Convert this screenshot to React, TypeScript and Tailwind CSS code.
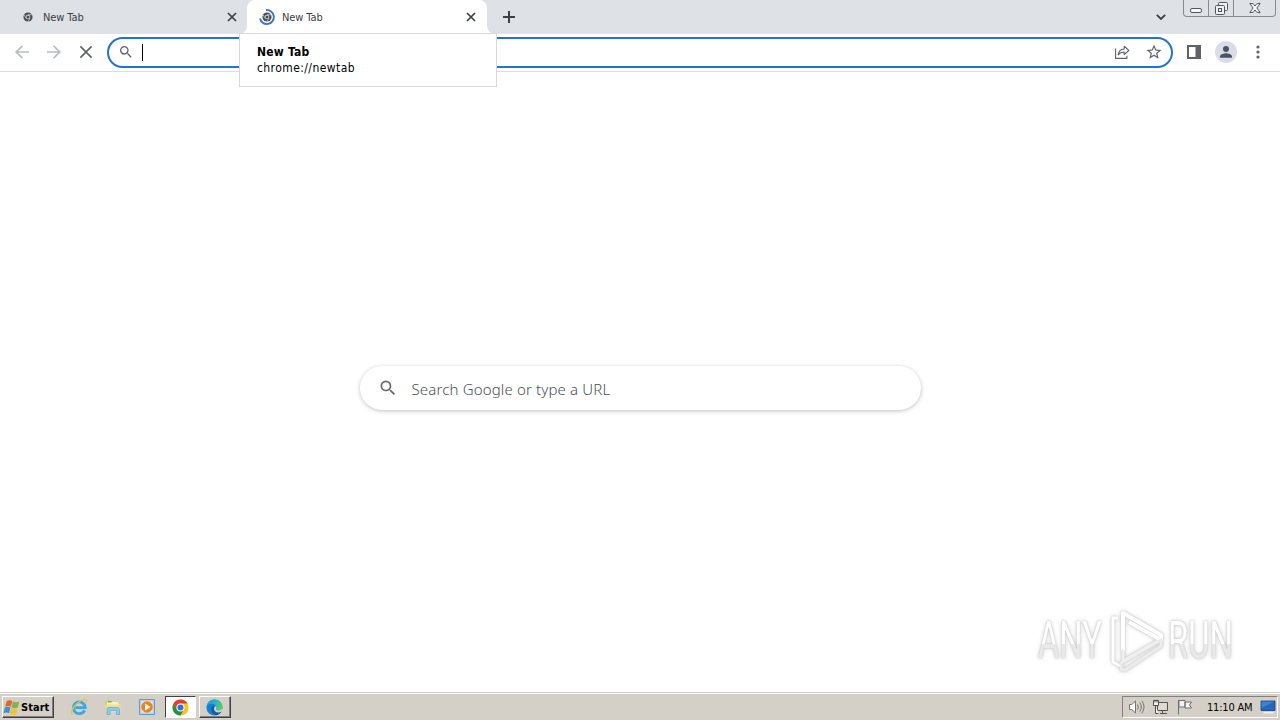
import type { ReactNode } from 'react';

const uiFont = "font-['DejaVu_Sans_Condensed','DejaVu_Sans',sans-serif]";

// --- ICONS ---
function ChromeMark({ className }: { className?: string }) {
  return (
    <svg viewBox="0 0 24 24" className={className}>
      <circle cx="12" cy="12" r="11" fill="#4b4f56" />
      <circle cx="12" cy="12" r="5.6" fill="#dee1e6" />
      <circle cx="12" cy="12" r="3.8" fill="#4b4f56" />
      <path d="M12 6.4h10M7.2 14.8L2.2 6.2M16.9 14.8l-5 8.6" stroke="#dee1e6" strokeWidth="1.6" />
    </svg>
  );
}

function SearchIcon({ className }: { className?: string }) {
  return (
    <svg viewBox="0 0 24 24" className={className} fill="currentColor">
      <path d="M15.5 14h-.79l-.28-.27A6.47 6.47 0 0 0 16 9.5 6.5 6.5 0 1 0 9.5 16c1.61 0 3.09-.59 4.23-1.57l.27.28v.79l5 4.99L20.49 19l-4.99-5zm-6 0C7.01 14 5 11.99 5 9.5S7.01 5 9.5 5 14 7.01 14 9.5 11.99 14 9.5 14z" />
    </svg>
  );
}

function Cross({ className, width = 2 }: { className?: string; width?: number }) {
  return (
    <svg viewBox="0 0 10 10" className={className} stroke="currentColor" strokeWidth={width} fill="none">
      <path d="M1 1l8 8M9 1L1 9" />
    </svg>
  );
}

function IconSlot({ children }: { children: ReactNode }) {
  return <button className="flex h-8 w-8 shrink-0 items-center justify-center">{children}</button>;
}

function ChromeLogo() {
  return (
    <svg viewBox="0 0 18 18" className="h-[17px] w-[17px]">
      <circle cx="9" cy="9" r="8.5" fill="#fbc116" />
      <path d="M9 9L5.3 11.1 1.64 4.75A8.5 8.5 0 0 0 9 17.5l3.7-6.4z" fill="#229342" />
      <path d="M1.64 4.75A8.5 8.5 0 0 1 16.36 4.75H9L5.3 11.1z" fill="#e33b2e" />
      <circle cx="9" cy="9" r="4.3" fill="#fff" />
      <circle cx="9" cy="9" r="3.2" fill="#2f6fdf" />
    </svg>
  );
}

function EdgeLogo() {
  return (
    <svg viewBox="0 0 18 18" className="h-[17px] w-[17px]">
      <defs>
        <linearGradient id="edgeTop" x1="0" y1="0" x2="1" y2="0.4">
          <stop offset="0" stopColor="#2196d8" />
          <stop offset="0.6" stopColor="#2bb5c8" />
          <stop offset="1" stopColor="#58c96a" />
        </linearGradient>
      </defs>
      <circle cx="9" cy="9" r="8.5" fill="#1580d2" />
      <path d="M.6 8.2C1 3.8 4.6.5 9 .5c5 0 8.5 3.6 8.5 7.4 0 2.6-2 4.2-4.3 4.2-1.9 0-3.1-.8-2.6-1.5.6-.8.8-1.5.5-2.6C10.600 6.200 8.700 4.900 6.200 4.900 3.500 4.900 1.400 6.200.6 8.200z" fill="url(#edgeTop)" />
      <path d="M6.200 8.200c-1.700 3.600.6 8 4.600 9 2.200-.5 4.300-1.900 5.400-3.700-3.200 1.500-7.600.5-7.700-3.300 0-1.100.5-1.800 1-2.300-1.200-.7-2.600-.6-3.300.3z" fill="#155aa3" />
      <path d="M8.500 10.200c0-1.100.5-1.800 1-2.300.9-.4 1.800.2 1.600 1.300-.1.600-.3 1-.5 1.400-.5.700.7 1.500 2.600 1.500 1.700 0 3.200-.8 3.900-2.200l1.200 1.500-2.100 2.100c-3.200 1.500-7.600.5-7.700-3.300z" fill="#d4d0c8" />
    </svg>
  );
}

function IeLogo() {
  return (
    <svg viewBox="0 0 18 18" className="h-[18px] w-[18px]" fill="none">
      <path d="M14.600 12.400A5.900 5.900 0 1 1 15.200 9.600H5.200" stroke="#3da5e0" strokeWidth="2.800" />
      <path d="M3 16.500C-.5 16 2 10 7 5.600S16.500.2 16.500 2.700c0 .8-.3 1.500-.7 2.200" stroke="#e2c05c" strokeWidth="1.300" />
    </svg>
  );
}

function ExplorerLogo() {
  return (
    <svg viewBox="0 0 18 18" className="h-[18px] w-[18px]">
      <path d="M1.500 2.500h5l1 1.500h8V14h-14z" fill="#e0c677" />
      <path d="M3 4h11.500v8H3z" fill="#f9f1c8" />
      <path d="M4 3h3.500v1.500H4z" fill="#6bb563" />
      <path d="M1.500 6.500h15V14h-15z" fill="#f3de96" />
      <path d="M3 16.500V11.500c0-1.500.7-2 2-2h8.500c1.300 0 2 .5 2 2v5h-3V12.500H6v4z" fill="#8accea" stroke="#5ba8cd" strokeWidth=".7" />
    </svg>
  );
}

function PlayerLogo() {
  return (
    <svg viewBox="0 0 18 18" className="h-[18px] w-[18px]">
      <path d="M1.500 1.500h15v15h-15z" fill="#c6dcee" stroke="#5b9bd0" />
      <path d="M3 3h12v12H3z" fill="#e3edf6" stroke="#8fb9dc" strokeWidth=".5" />
      <circle cx="9" cy="9" r="5.800" fill="#ef8219" />
      <path d="M7 5.500v7L12.500 9z" fill="#fff" />
    </svg>
  );
}

function WindowsFlag() {
  return (
    <svg viewBox="0 0 17 16" className="h-[17px] w-[18px] shrink-0">
      <path d="M3.600 1.800c2-1 3.800-.8 5.200.1L7.300 7.400c-1.500-.9-3.300-1-5.300-.1z" fill="#e9622f" />
      <path d="M9.300 2.300c1.700.9 3.800 1 6.200.1L14 8c-2.200.9-4.200.8-6-.1z" fill="#7fb742" />
      <path d="M1.800 8c2-.9 3.800-.8 5.300.1l-1.400 5.400c-1.500-.9-3.300-1-5.300-.1z" fill="#3f8fd8" />
      <path d="M7.800 8.600c1.700.9 3.800 1 6 .1l-1.500 5.600c-2.100.9-4 .8-5.900-.1z" fill="#f5c22f" />
    </svg>
  );
}

// --- TAB STRIP ---
function TabStrip() {
  return (
    <div className="flex h-[34px] bg-[#dee1e6] text-[#3c4043]">
      <div className="flex w-[247px] items-center pr-[10px] pl-[23px]">
        <ChromeMark className="h-[10px] w-[10px]" />
        <span className="mt-[2px] ml-[10px] flex-1 text-[11px] tracking-[-0.1px]">New Tab</span>
        <Cross className="h-[10px] w-[10px]" width={1.7} />
      </div>
      <div className="relative flex w-[240px] items-center rounded-t-lg bg-white pr-[11px] pl-3">
        <svg viewBox="0 0 8 8" className="absolute bottom-0 -left-2 h-2 w-2" fill="#fff">
          <path d="M8 0v8H0a8 8 0 0 0 8-8z" />
        </svg>
        <svg viewBox="0 0 8 8" className="absolute -right-2 bottom-0 h-2 w-2" fill="#fff">
          <path d="M0 0v8h8a8 8 0 0 1-8-8z" />
        </svg>
        <div className="relative flex h-4 w-4 items-center justify-center">
          <ChromeMark className="h-[10px] w-[10px]" />
          <svg viewBox="0 0 16 16" className="absolute inset-0" fill="none">
            <path d="M7 1.100a7 7 0 1 1-6 8.400" stroke="#3f78c8" strokeWidth="1.900" />
          </svg>
        </div>
        <span className="mt-[2px] ml-[7px] flex-1 text-[11px] tracking-[-0.1px]">New Tab</span>
        <Cross className="h-[10px] w-[10px]" width={1.7} />
      </div>
      <button className="ml-[15px] flex w-[14px] items-center justify-center">
        <svg viewBox="0 0 12 12" className="h-3 w-3" stroke="#3c4043" strokeWidth="2">
          <path d="M6 0v12M0 6h12" />
        </svg>
      </button>
      <div className="flex-1" />
      <button className="mr-[17px] flex w-[10px] items-center">
        <svg viewBox="0 0 10 6" className="h-[6px] w-[10px]" fill="none" stroke="#3c4043" strokeWidth="1.800">
          <path d="M.8.8L5 5 9.200.8" />
        </svg>
      </button>
      <div className="mr-1 flex h-[17px] w-[93px] rounded-b-[4px] border border-t-0 border-[#858b94] text-[#50555d]">
        <div className="flex w-[25px] justify-center border-r border-[#858b94] pt-[8px]">
          <svg viewBox="0 0 12 5" className="h-[5px] w-3" fill="#f7f8fa" stroke="currentColor">
            <rect x=".5" y=".5" width="11" height="4" rx="1.500" />
          </svg>
        </div>
        <div className="flex w-[25px] justify-center border-r border-[#858b94] pt-[2px]">
          <svg viewBox="0 0 13 13" className="h-[13px] w-[13px]" fill="#eef0f3" stroke="currentColor">
            <rect x="3.500" y=".5" width="9" height="8" rx="1" />
            <rect x=".5" y="3.500" width="9" height="9" rx="1" />
            <rect x="3.500" y="6.500" width="3" height="3" />
          </svg>
        </div>
        <div className="flex flex-1 justify-center pt-[3px]">
          <svg viewBox="0 0 12 10" className="h-[10px] w-3" fill="#f7f8fa" stroke="currentColor" strokeLinejoin="round">
            <path d="M.8.500h3L6 3 8.200.5h3L7.900 5l3.300 4.500h-3L6 7 3.800 9.500h-3L4.100 5z" />
          </svg>
        </div>
      </div>
    </div>
  );
}

// --- TOOLBAR ---
function Toolbar() {
  return (
    <div className="flex h-[38px] items-center border-b border-[#dadce0] bg-white pr-[6px] pb-[1px] pl-[6px] text-[#5f6368]">
      <IconSlot>
        <svg viewBox="0 0 14 14" className="h-[14px] w-[14px]" fill="none" stroke="#b9bbbe" strokeWidth="1.700">
          <path d="M14 7H1.500M7.400.8L1.200 7l6.200 6.200" />
        </svg>
      </IconSlot>
      <IconSlot>
        <svg viewBox="0 0 14 14" className="h-[14px] w-[14px]" fill="none" stroke="#b9bbbe" strokeWidth="1.700">
          <path d="M0 7h12.500M6.600.8L12.800 7l-6.200 6.200" />
        </svg>
      </IconSlot>
      <IconSlot>
        <Cross className="h-[14px] w-[14px]" width={1.2} />
      </IconSlot>
      <div className="ml-[5px] flex h-[31px] w-[1066px] items-center rounded-full border-2 border-[#2272ce] bg-white pr-[1px] pl-[9px]">
        <SearchIcon className="h-4 w-4" />
        <span className="ml-[8px] h-[17px] w-px bg-black" />
        <div className="flex-1" />
        <IconSlot>
          <svg viewBox="0 0 16 14" className="h-[14px] w-4" fill="none" stroke="currentColor" strokeWidth="1.100">
            <path d="M1.600 3.500v9.900h11.300v-2.700" />
            <path d="M4.200 9.900c.4-3.600 2.500-5.600 6-5.900V1.200l4.600 4.300-4.600 4.200V7C7.500 7 5.600 7.900 4.200 9.900z" strokeLinejoin="round" />
          </svg>
        </IconSlot>
        <IconSlot>
          <svg viewBox="0 0 24 24" className="h-[18px] w-[18px]" fill="currentColor">
            <path d="M22 9.240l-7.190-.62L12 2 9.190 8.630 2 9.240l5.460 4.730L5.820 21 12 17.270 18.180 21l-1.630-7.030L22 9.240zM12 15.400l-3.760 2.270 1-4.280-3.320-2.880 4.380-.38L12 6.100l1.710 4.040 4.380.38-3.320 2.880 1 4.280L12 15.400z" />
          </svg>
        </IconSlot>
      </div>
      <div className="ml-[5px] flex">
        <IconSlot>
          <svg viewBox="0 0 14 14" className="h-[14px] w-[14px]">
            <path d="M1 1h12v12H1z" fill="none" stroke="currentColor" strokeWidth="2" />
            <path d="M8.500 1H13v12H8.500z" fill="currentColor" />
          </svg>
        </IconSlot>
        <IconSlot>
          <svg viewBox="0 0 22 22" className="h-[22px] w-[22px]">
            <circle cx="11" cy="11" r="11" fill="#dadde3" />
            <circle cx="11" cy="7.900" r="3" fill="#48546b" />
            <path d="M5 16.800v-1.500c0-2 4-3.100 6-3.100s6 1.100 6 3.100v1.500z" fill="#48546b" />
          </svg>
        </IconSlot>
        <IconSlot>
          <svg viewBox="0 0 4 14" className="h-[14px] w-1" fill="currentColor">
            <circle cx="2" cy="2" r="1.600" />
            <circle cx="2" cy="7" r="1.600" />
            <circle cx="2" cy="12" r="1.600" />
          </svg>
        </IconSlot>
      </div>
    </div>
  );
}

function WatermarkWord({ children }: { children: string }) {
  return (
    <div className="w-[66px]">
      <span className="block w-max origin-left scale-x-[0.63] bg-linear-to-b from-white from-55% to-[#e9e9e9] to-55% bg-clip-text text-[52px] leading-[62px] text-transparent">
        {children}
      </span>
    </div>
  );
}

function Watermark() {
  return (
    <div className="absolute top-[537px] left-[1038px] flex h-[64px] w-[198px] items-center font-['Roboto','Liberation_Sans',sans-serif] [filter:drop-shadow(0_0_1px_#c4c4c4)_drop-shadow(0_0_2px_#dcdcdc)]">
      <WatermarkWord>ANY</WatermarkWord>
      <svg viewBox="0 0 56 64" className="ml-[4px] h-[64px] w-14 shrink-0" fill="none" strokeLinejoin="round">
        <path d="M10 9H5v44l7 4" stroke="#fff" strokeWidth="3" />
        <path d="M15 42V4l38 22v5L21 13" stroke="#fff" strokeWidth="4" />
        <path d="M53 31L13 54v6l4 1 36-24z" stroke="#ececec" strokeWidth="3" />
        <path d="M15 40v12l35-20" stroke="#f0f0f0" strokeWidth="3" />
      </svg>
      <div className="ml-[4px]">
        <WatermarkWord>RUN</WatermarkWord>
      </div>
    </div>
  );
}

// --- TASKBAR ---
function Taskbar() {
  return (
    <div className="flex h-[28px] items-start border-t border-[#d4d0c8] bg-[#d4d0c8] text-black">
      <div className="flex h-[27px] flex-1 items-center border-t border-white">
        <button className="ml-[2px] flex h-[22px] w-[52px] items-center border border-t-white border-r-[#404040] border-b-[#404040] border-l-white shadow-[inset_-1px_-1px_0_#808080]">
          <WindowsFlag />
          <span className="mt-[2px] text-[11px] font-bold tracking-[0.05px]">Start</span>
        </button>
        <div className="ml-[16px] flex w-[86px] items-center justify-between">
          <IeLogo />
          <ExplorerLogo />
          <PlayerLogo />
        </div>
        <div className="ml-[9px] flex h-[22px] w-[31px] items-center justify-center border border-t-[#404040] border-r-white border-b-white border-l-[#404040] bg-white">
          <ChromeLogo />
        </div>
        <div className="ml-[3px] flex h-[22px] w-8 items-center justify-center border border-t-white border-r-[#404040] border-b-[#404040] border-l-white pr-px shadow-[inset_-1px_-1px_0_#808080]">
          <EdgeLogo />
        </div>
        <div className="flex-1" />
        <div className="mr-[2px] flex h-[22px] w-[156px] items-center border border-t-[#808080] border-r-white border-b-white border-l-[#808080] pl-[5px]">
          <svg viewBox="0 0 17 16" className="h-4 w-[17px]" fill="none" stroke="#77756f">
            <path d="M1.500 5.500h2.300L7.500 2v12l-3.700-3.500H1.500z" fill="#fff" />
            <path d="M9.500 5.500q1.800 2.500 0 5M11.700 3.500q3.300 4.500 0 9M13.800 1.800q4.600 6.200 0 12.400" />
          </svg>
          <svg viewBox="0 0 17 16" className="ml-[7px] h-4 w-[17px]" fill="#f4f2ee" stroke="#55534f">
            <path d="M5.500 3.500h10v8h-10z" fill="#dedbd5" />
            <path d="M1.500 1.500h5v5h-5zM3 3.500V.8M5 3.500V.8M3.500 6.500v8h3M8 14.500h7M10.500 11.500v3" />
          </svg>
          <svg viewBox="0 0 16 16" className="ml-[8px] h-4 w-4" fill="#f5f4f1" stroke="#706e69">
            <path d="M1.500 1v14.500M2 1.500h6v6.500H2zM8 3h6.500l-2 3 2 3H8z" />
          </svg>
          <span className="mt-[2px] ml-[14px] w-[48px] text-[11px] tracking-[-0.2px] whitespace-nowrap">11:10 AM</span>
          <svg viewBox="0 0 16 14" className="ml-[5px] h-[14px] w-4 shrink-0">
            <path d="M1 1h14v9.500H1z" fill="#2467bd" stroke="#153c7a" strokeWidth=".8" />
            <path d="M1.500 1.500h13L1.500 8z" fill="#3f80cf" />
            <path d="M4 12h9l1 1.500H3z" fill="#f3f3f3" />
          </svg>
        </div>
      </div>
    </div>
  );
}

export default function App() {
  return (
    <div className={`relative flex h-[720px] w-[1280px] flex-col overflow-hidden bg-white ${uiFont}`}>
      <TabStrip />
      <Toolbar />
      <main className="relative flex flex-1 flex-col items-center">
        <div className="mt-[294px] flex h-[44px] w-[561px] items-center rounded-full bg-white pl-[18px] shadow-[0_1px_4px_rgba(32,33,36,0.28)]">
          <SearchIcon className="h-5 w-5 text-[#6a6a6a]" />
          <span className="mt-[3px] ml-[14px] font-['Noto_Sans','Open_Sans',sans-serif] text-[15px] font-light tracking-[0.15px] text-[#4d5054]">
            Search Google or type a URL
          </span>
        </div>
        <Watermark />
      </main>
      <Taskbar />

      {/* hover card of the active tab */}
      <div className="absolute top-[33px] left-[239px] flex h-[54px] w-[258px] flex-col border border-[#d6d8dc] bg-white pt-[10px] pl-[17px] text-black">
        <span className="text-[12px] leading-4 font-bold tracking-[0.2px]">New Tab</span>
        <span className="text-[12px] leading-4 tracking-[0.42px]">chrome://newtab</span>
      </div>
    </div>
  );
}
